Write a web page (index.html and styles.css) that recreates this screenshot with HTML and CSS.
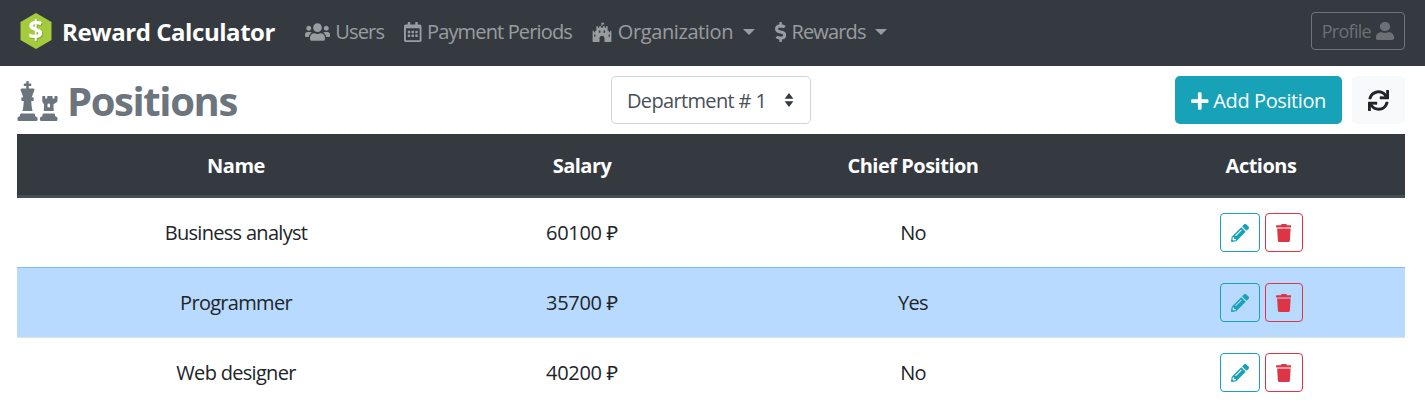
FILE: index.html
```html
<!DOCTYPE html>
<html lang="en">
<head>
    <meta charset="UTF-8">
    <title>Reward Calculator</title>
    <link rel="stylesheet" href="styles.css">
</head>
<body>
    <nav class="navbar">
        <a class="brand">
            <svg class="brand-logo" viewBox="0 0 32 36">
                <path d="M16 0 31.500 9V27L16 36 .5 27V9Z" fill="#a4cb3b"/>
                <text x="15.500" y="26.500" text-anchor="middle" class="brand-dollar">$</text>
            </svg>
            Reward Calculator
        </a>
        <a class="nav-link">
            <svg class="icon" viewBox="0 0 640 512"><path d="M96 224c35.3 0 64-28.7 64-64s-28.7-64-64-64-64 28.7-64 64 28.7 64 64 64zm448 0c35.3 0 64-28.7 64-64s-28.7-64-64-64-64 28.7-64 64 28.7 64 64 64zm32 32h-64c-17.6 0-33.5 7.1-45.1 18.6 40.3 22.1 68.9 62 75.1 109.4h66c17.7 0 32-14.3 32-32v-32c0-35.3-28.7-64-64-64zm-256 0c61.9 0 112-50.1 112-112S381.9 32 320 32 208 82.1 208 144s50.1 112 112 112zm76.8 32h-8.3c-20.8 10-43.9 16-68.5 16s-47.6-6-68.5-16h-8.3C179.6 288 128 339.6 128 403.2V432c0 26.5 21.5 48 48 48h288c26.5 0 48-21.5 48-48v-28.8c0-63.6-51.6-115.2-115.2-115.2zm-223.7-13.4C161.5 263.1 145.6 256 128 256H64c-35.3 0-64 28.7-64 64v32c0 17.7 14.3 32 32 32h65.9c6.3-47.4 34.9-87.3 75.2-109.4z"/></svg>
            Users
        </a>
        <a class="nav-link">
            <svg class="icon" viewBox="0 0 448 512"><path d="M148 288h-40c-6.6 0-12-5.4-12-12v-40c0-6.6 5.4-12 12-12h40c6.6 0 12 5.4 12 12v40c0 6.6-5.4 12-12 12zm108-12v-40c0-6.6-5.4-12-12-12h-40c-6.6 0-12 5.4-12 12v40c0 6.6 5.4 12 12 12h40c6.6 0 12-5.4 12-12zm96 0v-40c0-6.6-5.4-12-12-12h-40c-6.6 0-12 5.4-12 12v40c0 6.6 5.4 12 12 12h40c6.6 0 12-5.4 12-12zm-96 96v-40c0-6.6-5.4-12-12-12h-40c-6.6 0-12 5.4-12 12v40c0 6.6 5.4 12 12 12h40c6.6 0 12-5.4 12-12zm-96 0v-40c0-6.6-5.4-12-12-12h-40c-6.6 0-12 5.4-12 12v40c0 6.6 5.4 12 12 12h40c6.6 0 12-5.4 12-12zm192 0v-40c0-6.6-5.4-12-12-12h-40c-6.6 0-12 5.4-12 12v40c0 6.6 5.4 12 12 12h40c6.6 0 12-5.4 12-12zm96-260v352c0 26.5-21.5 48-48 48H48c-26.5 0-48-21.5-48-48V112c0-26.5 21.5-48 48-48h48V12c0-6.6 5.4-12 12-12h40c6.6 0 12 5.4 12 12v52h128V12c0-6.6 5.4-12 12-12h40c6.6 0 12 5.4 12 12v52h48c26.5 0 48 21.5 48 48zm-48 346V160H48v298c0 3.3 2.7 6 6 6h340c3.3 0 6-2.7 6-6z"/></svg>
            Payment Periods
        </a>
        <a class="nav-link dropdown org-link">
            <svg class="icon" viewBox="0 0 512 512"><path fill-rule="evenodd" d="M240 16h70v50h-46v34h-24ZM16 226h32v34h32v-34h32V110h40v34h32v-34h48v34h48v-34h48v34h32v-34h40v116h32v34h32v-34h32v286H320V416c0-36-28-64-64-64s-64 28-64 64v96H16ZM176 220h40v56h-40ZM296 220h40v56h-40ZM56 320h32v56H56ZM424 320h32v56h-32Z"/></svg>
            Organization
        </a>
        <a class="nav-link dropdown">
            <svg class="icon" viewBox="0 0 288 512"><path d="M209.2 233.4l-108-31.6C88.7 198.2 80 186.5 80 173.5c0-16.3 13.2-29.5 29.5-29.5h66.3c12.2 0 24.2 3.7 34.2 10.5 6.1 4.1 14.3 3.1 19.5-2l34.8-34c7.1-6.9 6.1-18.4-1.8-24.5C238 74.8 207.4 64.1 176 64V16c0-8.8-7.2-16-16-16h-32c-8.8 0-16 7.2-16 16v48h-2.5C45.8 64-5.4 118.7.5 183.6c4.2 46.1 39.4 83.6 83.8 96.6l102.5 30c12.5 3.7 21.2 15.3 21.2 28.3 0 16.3-13.2 29.5-29.5 29.5h-66.3C100 368 88 364.3 78 357.5c-6.1-4.1-14.3-3.1-19.5 2l-34.8 34c-7.1 6.9-6.1 18.4 1.8 24.5 24.5 19.2 55.1 29.9 86.5 30v48c0 8.8 7.2 16 16 16h32c8.8 0 16-7.2 16-16v-48.2c46.6-.9 90.3-28.6 105.7-72.7 21.5-61.6-14.6-124.8-72.5-141.7z"/></svg>
            Rewards
        </a>
        <button class="btn-profile">
            Profile
            <svg class="icon profile-icon" viewBox="0 0 448 512" preserveAspectRatio="none"><path d="M224 256c70.7 0 128-57.3 128-128S294.7 0 224 0 96 57.3 96 128s57.3 128 128 128zm89.6 32h-16.7c-22.2 10.2-46.9 16-72.9 16s-50.6-5.800-72.900-16h-16.700C60.200 288 0 348.200 0 422.400V464c0 26.500 21.500 48 48 48h352c26.500 0 48-21.500 48-48v-41.600c0-74.200-60.200-134.400-134.400-134.400z"/></svg>
        </button>
    </nav>

    <div class="container">
        <div class="toolbar">
            <h1 class="title">
                <svg class="title-icon" viewBox="0 0 512 512"><path d="M74 208H64a16 16 0 0 0-16 16v16a16 16 0 0 0 16 16h15.94A535.78 535.78 0 0 1 64 384h128a535.78 535.78 0 0 1-15.94-128H192a16 16 0 0 0 16-16v-16a16 16 0 0 0-16-16h-10l33.89-90.38a16 16 0 0 0-15-21.62H144V64h24a8 8 0 0 0 8-8V40a8 8 0 0 0-8-8h-24V8a8 8 0 0 0-8-8h-16a8 8 0 0 0-8 8v24H88a8 8 0 0 0-8 8v16a8 8 0 0 0 8 8h24v32H55.09a16 16 0 0 0-15 21.62zm173.16 251.58L224 448v-16a16 16 0 0 0-16-16H48a16 16 0 0 0-16 16v16L8.85 459.58A16 16 0 0 0 0 473.89V496a16 16 0 0 0 16 16h224a16 16 0 0 0 16-16v-22.11a16 16 0 0 0-8.84-14.31zm92.77-157.78l-3.29 82.2h126.72l-3.29-82.21 24.6-20.79A32 32 0 0 0 512 256.54V198a6 6 0 0 0-6-6h-26.38a6 6 0 0 0-6 6v26h-24.71v-26a6 6 0 0 0-6-6H386.1a6 6 0 0 0-6 6v26h-24.71v-26a6 6 0 0 0-6-6H323a6 6 0 0 0-6 6v58.6a32 32 0 0 0 11.36 24.4zM384 304a16 16 0 0 1 32 0v32h-32zm119.16 155.58L480 448v-16a16 16 0 0 0-16-16H336a16 16 0 0 0-16 16v16l-23.15 11.58a16 16 0 0 0-8.85 14.31V496a16 16 0 0 0 16 16h192a16 16 0 0 0 16-16v-22.11a16 16 0 0 0-8.84-14.31z"/></svg>
                Positions
            </h1>
            <div class="select-box">
                Department # 1
                <svg class="select-arrows" viewBox="0 0 10 16"><path d="M5 0 10 6.500H0ZM5 16 0 9.500H10Z"/></svg>
            </div>
            <div class="toolbar-buttons">
                <button class="btn-add">
                    <svg class="icon" viewBox="0 0 448 512"><path d="M416 208H272V64c0-17.67-14.33-32-32-32h-32c-17.67 0-32 14.33-32 32v144H32c-17.67 0-32 14.33-32 32v32c0 17.67 14.33 32 32 32h144v144c0 17.67 14.33 32 32 32h32c17.67 0 32-14.33 32-32V304h144c17.67 0 32-14.33 32-32v-32c0-17.67-14.33-32-32-32z"/></svg>
                    Add Position
                </button>
                <button class="btn-refresh">
                    <svg class="icon" viewBox="0 0 512 512"><path d="M440.65 12.57l4 82.77A247.16 247.16 0 0 0 255.83 8C134.73 8 33.91 94.92 12.29 209.82A12 12 0 0 0 24.09 224h49.05a12 12 0 0 0 11.67-9.26 175.91 175.91 0 0 1 317-56.94l-101.46-4.86a12 12 0 0 0-12.57 12v47.41a12 12 0 0 0 12 12H500a12 12 0 0 0 12-12V12a12 12 0 0 0-12-12h-47.37a12 12 0 0 0-11.98 12.57zM255.83 432a175.61 175.61 0 0 1-146-77.8l101.8 4.87a12 12 0 0 0 12.57-12v-47.4a12 12 0 0 0-12-12H12a12 12 0 0 0-12 12V500a12 12 0 0 0 12 12h47.35a12 12 0 0 0 12-12.6l-4.15-82.57A247.17 247.17 0 0 0 255.83 504c121.11 0 221.93-86.92 243.55-201.82a12 12 0 0 0-11.8-14.18h-49.05a12 12 0 0 0-11.67 9.26A175.86 175.86 0 0 1 255.83 432z"/></svg>
                </button>
            </div>
        </div>

        <table class="positions">
            <thead>
                <tr>
                    <th class="col-name">Name</th>
                    <th class="col-salary">Salary</th>
                    <th class="col-chief">Chief Position</th>
                    <th>Actions</th>
                </tr>
            </thead>
            <tbody>
                <tr>
                    <td>Business analyst</td>
                    <td class="salary">60100 ₽</td>
                    <td>No</td>
                    <td>
                        <div class="actions">
                            <button class="btn-edit"><svg class="icon" viewBox="0 0 512 512"><use href="#pencil"/></svg></button>
                            <button class="btn-delete"><svg class="icon" viewBox="0 0 448 512"><use href="#trash"/></svg></button>
                        </div>
                    </td>
                </tr>
                <tr class="selected">
                    <td>Programmer</td>
                    <td class="salary">35700 ₽</td>
                    <td>Yes</td>
                    <td>
                        <div class="actions">
                            <button class="btn-edit"><svg class="icon" viewBox="0 0 512 512"><use href="#pencil"/></svg></button>
                            <button class="btn-delete"><svg class="icon" viewBox="0 0 448 512"><use href="#trash"/></svg></button>
                        </div>
                    </td>
                </tr>
                <tr>
                    <td>Web designer</td>
                    <td class="salary">40200 ₽</td>
                    <td>No</td>
                    <td>
                        <div class="actions">
                            <button class="btn-edit"><svg class="icon" viewBox="0 0 512 512"><use href="#pencil"/></svg></button>
                            <button class="btn-delete"><svg class="icon" viewBox="0 0 448 512"><use href="#trash"/></svg></button>
                        </div>
                    </td>
                </tr>
            </tbody>
        </table>
    </div>

    <svg class="defs">
        <defs>
            <path id="pencil" d="M497.9 142.1l-46.1 46.1c-4.7 4.7-12.3 4.7-17 0l-111-111c-4.7-4.7-4.7-12.3 0-17l46.1-46.1c18.7-18.7 49.1-18.7 67.9 0l60.1 60.1c18.8 18.7 18.8 49.1 0 67.9zM284.2 99.8L21.6 362.4.4 483.9c-2.9 16.4 11.4 30.6 27.8 27.8l121.5-21.3 262.6-262.6c4.7-4.7 4.7-12.3 0-17l-111-111c-4.8-4.7-12.4-4.7-17.1 0zM124.1 339.9c-5.5-5.5-5.5-14.3 0-19.8l154-154c5.5-5.5 14.3-5.5 19.8 0s5.5 14.3 0 19.8l-154 154c-5.5 5.5-14.3 5.5-19.8 0zM88 424h48v36.3l-64.5 11.3-31.1-31.1L51.7 376H88v48z"/>
            <path id="trash" d="M432 32H312l-9.4-18.7A24 24 0 0 0 281.1 0H166.8a23.72 23.72 0 0 0-21.4 13.3L136 32H16A16 16 0 0 0 0 48v32a16 16 0 0 0 16 16h416a16 16 0 0 0 16-16V48a16 16 0 0 0-16-16zM53.2 467a48 48 0 0 0 47.9 45h245.8a48 48 0 0 0 47.9-45L416 128H32z"/>
        </defs>
    </svg>
</body>
</html>
```

FILE: styles.css
```css
* {
    box-sizing: border-box;
}

body {
    margin: 0;
    height: 412px;
    overflow: hidden;
    font-family: "Open Sans", "Noto Sans", sans-serif;
    font-size: 20px;
    letter-spacing: -0.7px;
    color: #212529;
    background-color: #fff;
}

.icon {
    width: auto;
    height: 20px;
    fill: currentColor;
    vertical-align: -3px;
}

.defs {
    display: none;
}

/* navbar */
.navbar {
    display: flex;
    align-items: center;
    height: 66px;
    padding: 0 20px 4px;
    background-color: #343a40;
}

.brand {
    display: flex;
    align-items: center;
    gap: 10px;
    margin-right: 30px;
    font-size: 24px;
    font-weight: 700;
    letter-spacing: -0.45px;
    color: #fff;
    white-space: nowrap;
}

.brand-logo {
    width: 32px;
    height: 36px;
}

.brand-dollar {
    font-size: 26px;
    font-weight: 700;
    fill: #fff;
    filter: drop-shadow(1.5px 1.5px 0 #85a62e);
}

.nav-link {
    margin-right: 20px;
    letter-spacing: -0.85px;
    color: rgba(255, 255, 255, 0.5);
    white-space: nowrap;
}

.nav-link .icon {
    margin-right: 1px;
}

.org-link {
    letter-spacing: -0.4px;
}

.dropdown::after {
    content: "";
    display: inline-block;
    margin-left: 5px;
    vertical-align: 4px;
    border-top: 6px solid;
    border-left: 6px solid transparent;
    border-right: 6px solid transparent;
}

.btn-profile {
    display: flex;
    align-items: center;
    gap: 5px;
    margin-left: auto;
    height: 38px;
    padding: 0 10px;
    font-family: inherit;
    font-size: 18px;
    letter-spacing: -0.7px;
    color: rgba(255, 255, 255, 0.28);
    background: transparent;
    border: 1px solid #6c757d;
    border-radius: 4px;
}

.profile-icon {
    width: 18px;
    height: 18px;
}

/* toolbar */
.container {
    padding: 0 20px 0 17px;
}

.toolbar {
    position: relative;
    display: flex;
    align-items: center;
    justify-content: space-between;
    height: 68px;
}

.title {
    margin: 0;
    padding-top: 2px;
    font-size: 40px;
    font-weight: 700;
    line-height: 48px;
    letter-spacing: -1.4px;
    color: #6c757d;
    white-space: nowrap;
}

.title-icon {
    width: 41px;
    height: 40px;
    fill: currentColor;
    vertical-align: -5px;
}

.select-box {
    position: absolute;
    left: 594px;
    top: 10px;
    display: flex;
    align-items: center;
    justify-content: space-between;
    width: 200px;
    height: 48px;
    padding: 0 16px 0 15px;
    letter-spacing: -0.65px;
    color: #495057;
    background-color: #fff;
    border: 1px solid #ced4da;
    border-radius: 5px;
}

.select-arrows {
    width: 10px;
    height: 14px;
    fill: #343a40;
}

.toolbar-buttons {
    display: flex;
    gap: 10px;
}

.btn-add {
    width: 167px;
    height: 48px;
    padding: 0;
    font-family: inherit;
    font-size: 20px;
    letter-spacing: -0.4px;
    color: #fff;
    background-color: #17a2b8;
    border: 0;
    border-radius: 5px;
}

.btn-refresh {
    width: 53px;
    height: 48px;
    padding: 0;
    color: #212529;
    background-color: #f8f9fa;
    border: 0;
    border-radius: 5px;
}

.btn-refresh .icon {
    height: 21px;
}

/* table */
.positions {
    width: 1388px;
    border-collapse: separate;
    border-spacing: 0;
    table-layout: fixed;
    text-align: center;
}

.positions th {
    height: 64px;
    padding: 2px 0 0;
    font-weight: 700;
    letter-spacing: -0.5px;
    color: #fff;
    background-color: #343a40;
    border-bottom: 3px solid #454d55;
}

.col-name {
    width: 438px;
}

.col-salary {
    width: 254px;
}

.col-chief {
    width: 408px;
}

.positions td {
    height: 70px;
    padding: 0;
    border-top: 1px solid #dee2e6;
}

.positions tbody tr:first-child td {
    height: 69px;
    border-top: 0;
}

.positions .salary {
    letter-spacing: -0.3px;
}

.positions .selected td {
    background-color: #b8daff;
    border-top-color: #7abaff;
}

.actions {
    display: flex;
    justify-content: center;
    gap: 5px;
}

.actions button {
    display: flex;
    align-items: center;
    justify-content: center;
    height: 39px;
    padding: 0;
    background: transparent;
    border: 1px solid;
    border-radius: 4px;
}

.actions .icon {
    height: 18px;
}

.btn-edit {
    width: 40px;
    color: #17a2b8;
}

.btn-delete {
    width: 38px;
    color: #dc3545;
}
```
